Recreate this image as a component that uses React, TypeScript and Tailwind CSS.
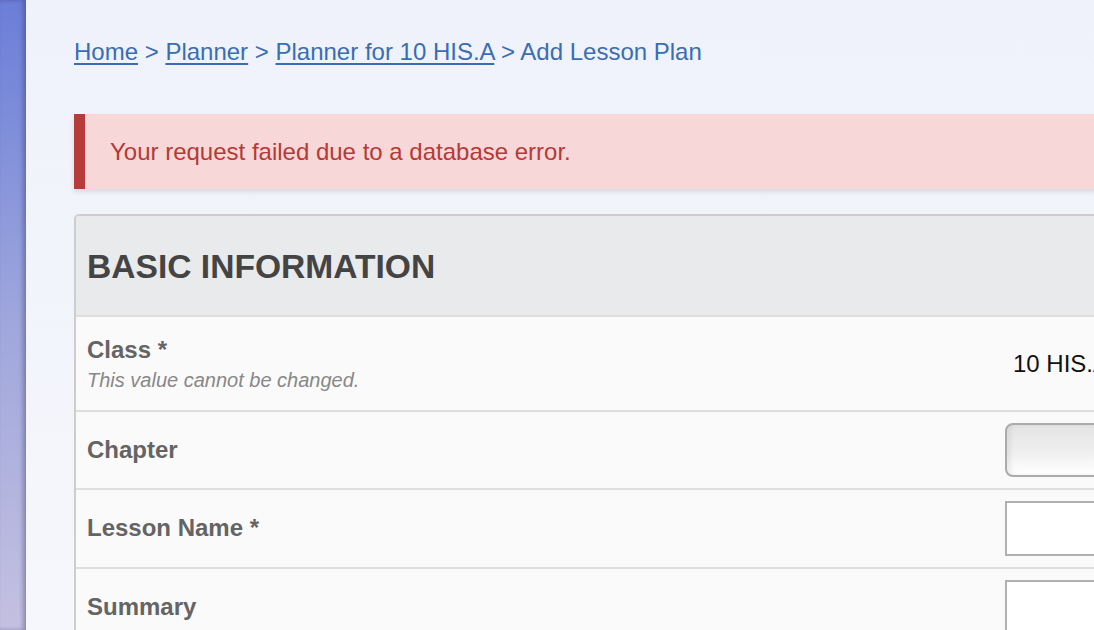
import React from 'react';

const font = { fontFamily: '"Liberation Sans", Arial, Helvetica, sans-serif' };

function Crumbs() {
  return (
    <div className="pt-[38px] text-[24px] leading-[28px] text-[#3a6db2] whitespace-nowrap">
      <a href="#" className="underline underline-offset-[3px]">Home</a>
      {' > '}
      <a href="#" className="underline underline-offset-[3px]">Planner</a>
      {' > '}
      <a href="#" className="underline underline-offset-[3px]">Planner for 10 HIS.A</a>
      {' > '}
      <span>Add Lesson Plan</span>
    </div>
  );
}

function Row({ label, note, children, last, pad = 'py-[11px]' }: { label: string; note?: string; children: React.ReactNode; last?: boolean; pad?: string }) {
  return (
    <div className={`grid grid-cols-[929px_1fr] bg-[#fafafa] ${pad} ${last ? '' : 'border-b-2 border-[#dedede]'}`}>
      <div className="pl-[11px]">
        {note ? (
          <div>
            <div className="text-[24px] leading-[28px] font-bold text-[#646464]">{label}</div>
            <div className="text-[20px] leading-[24px] italic text-[#888] mt-[4px]">{note}</div>
          </div>
        ) : (
          <div className="h-[54px] flex items-center text-[24px] leading-[28px] font-bold text-[#646464]">{label}</div>
        )}
      </div>
      <div className={`flex ${note ? 'items-center' : 'items-start'}`}>{children}</div>
    </div>
  );
}

export default function App() {
  return (
    <div className="flex h-[630px] w-[1094px] overflow-hidden bg-[#f0f2fb]" style={font}>
      {/* side strip */}
      <div className="w-[26px] shrink-0 bg-gradient-to-b from-[#6b7dd8] via-[#9ea6dc] to-[#c4c0e1] shadow-[inset_-3px_0_4px_rgba(40,40,90,0.35)]" />

      <div className="flex-1 pl-[48px] overflow-hidden bg-gradient-to-b from-[#eff2fb] to-[#f6f7fc]">
        <div className="w-[1300px]">
          <Crumbs />

          <div className="mt-[48px] h-[75px] flex items-center bg-[#f8d7d8] border-l-[11px] border-[#b73b38] pl-[25px] shadow-[0_3px_5px_rgba(0,0,0,0.1)]">
            <span className="text-[24px] text-[#b53a37]">Your request failed due to a database error.</span>
          </div>

          <div className="mt-[25px] border-2 border-[#cdcdcd] rounded-tl-[5px] overflow-hidden">
            <div className="h-[101px] flex items-center pl-[11px] pt-[4px] bg-[#e9eaec] border-b-2 border-[#dedede]">
              <h2 className="text-[33.6px] font-bold text-[#444]">BASIC INFORMATION</h2>
            </div>

            <Row label="Class *" note="This value cannot be changed." pad="pt-[19px] pb-[18px]">
              <span className="pl-[8px] text-[24px] text-[#111]">10 HIS.A</span>
            </Row>

            <Row label="Chapter">
              <div className="w-[300px] h-[54px] rounded-[8px] border-2 border-[#ababab] bg-gradient-to-b from-[#e4e4e4] via-[#eeeeee] to-white shadow-[inset_4px_0_4px_rgba(0,0,0,0.06)]" />
            </Row>

            <Row label="Lesson Name *">
              <input className="w-[300px] h-[55px] border-2 border-[#b0b0b0] bg-white outline-none" />
            </Row>

            <Row label="Summary" last>
              <textarea className="w-[300px] h-[120px] border-2 border-[#b0b0b0] bg-white outline-none resize-none" />
            </Row>
          </div>
        </div>
      </div>
    </div>
  );
}
